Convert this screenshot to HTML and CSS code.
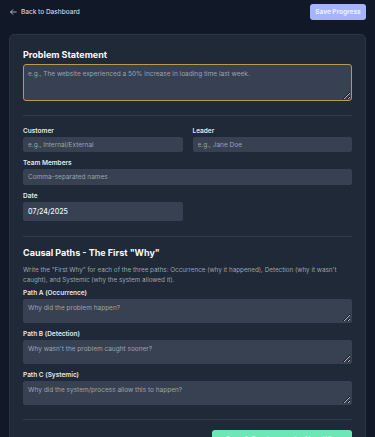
FILE: index.html
```html
<!DOCTYPE html>
<html>
<head>
	<title>5 Whys - Problem</title>
	<link rel="stylesheet" href="styles.css">
</head>
<body>
	<header class="topbar">
		<a href="#" class="back">
			<svg width="9" height="8" viewBox="0 0 24 24" fill="none" stroke="currentColor" stroke-width="2.4" stroke-linecap="round" stroke-linejoin="round"><path d="M20 12H4M10 5l-7 7 7 7"/></svg>
			Back to Dashboard
		</a>
		<button class="btn-save">Save Progress</button>
	</header>

	<main class="card">
		<!-- problem -->
		<h2 class="title">Problem Statement</h2>
		<textarea class="area area-main" placeholder="e.g., The website experienced a 50% increase in loading time last week."></textarea>

		<hr class="divider">

		<div class="row">
			<div class="field">
				<label>Customer</label>
				<input type="text" placeholder="e.g., Internal/External">
			</div>
			<div class="field">
				<label>Leader</label>
				<input type="text" placeholder="e.g., Jane Doe">
			</div>
		</div>
		<div class="field">
			<label>Team Members</label>
			<input type="text" class="wide" placeholder="Comma-separated names">
		</div>
		<div class="row">
			<div class="field">
				<label>Date</label>
				<input type="text" class="date" value="07/24/2025">
			</div>
		</div>

		<hr class="divider">

		<!-- causal paths -->
		<h2 class="title title-section">Causal Paths - The First "Why"</h2>
		<p class="desc">Write the "First Why" for each of the three paths: Occurrence (why it happened), Detection (why it wasn't caught), and Systemic (why the system allowed it).</p>

		<div class="field">
			<label>Path A (Occurrence)</label>
			<textarea class="area" placeholder="Why did the problem happen?"></textarea>
		</div>
		<div class="field">
			<label>Path B (Detection)</label>
			<textarea class="area" placeholder="Why wasn't the problem caught sooner?"></textarea>
		</div>
		<div class="field">
			<label>Path C (Systemic)</label>
			<textarea class="area" placeholder="Why did the system/process allow this to happen?"></textarea>
		</div>

		<hr class="divider">

		<div class="actions">
			<button class="btn-next">Save &amp; Continue to the Next Why</button>
		</div>
	</main>
</body>
</html>
```
FILE: styles.css
```css
body {
	margin: 0;
	background: #111827;
	font-family: Inter, "Noto Sans", sans-serif;
	color: #e5e7eb;
	overflow: hidden;
}
.topbar {
	display: flex;
	justify-content: space-between;
	align-items: center;
	padding: 4px 9px 0 9px;
	height: 16px;
}
.back {
	display: flex;
	align-items: center;
	gap: 3px;
	color: #d1d5db;
	font-size: 6.5px;
	font-weight: 500;
	text-decoration: none;
}
.btn-save {
	width: 56px;
	height: 16px;
	border: none;
	border-radius: 3px;
	background: #a5b4fc;
	color: #eef2ff;
	font-family: inherit;
	font-size: 6.5px;
	font-weight: 700;
	padding: 0;
}
.card {
	margin: 14px 9px 0 9px;
	background: #1f2937;
	border: 1px solid #2b3544;
	border-radius: 5px;
	padding: 14px 13px 30px 13px;
}
.title {
	margin: 0 0 4px 0;
	font-size: 9px;
	line-height: 11px;
	font-weight: 700;
	color: #f9fafb;
}
.title-section {
	margin-top: 2px;
}
.area, input {
	display: block;
	box-sizing: border-box;
	width: 100%;
	background: #374151;
	border: 1px solid #374151;
	border-radius: 2px;
	color: #f3f4f6;
	font-family: inherit;
	font-size: 6.5px;
	padding: 4px 4px;
	margin: 0;
}
.area::placeholder, input::placeholder {
	color: #9ca3af;
}
.area {
	height: 24px;
	resize: vertical;
}
.area-main {
	height: 37px;
	border: 1.5px solid #b89a4a;
	border-radius: 3px;
	padding-top: 5px;
}
input {
	height: 15px;
}
input.wide {
	height: 16px;
}
input.date {
	height: 19px;
	font-size: 7px;
	font-weight: 500;
}
.divider {
	border: none;
	border-top: 1px solid #323c4b;
	margin: 14px 0 10px 0;
}
.divider + .row {
	padding-top: 1px;
}
.row {
	display: grid;
	grid-template-columns: 1fr 1fr;
	gap: 10px;
}
.field {
	margin-bottom: 7px;
}
.field label {
	display: block;
	font-size: 6.5px;
	font-weight: 600;
	line-height: 8px;
	margin: 0 0 2px 0;
	color: #e5e7eb;
}
.row + .divider {
	margin-top: 8px;
}
.field + .divider {
	margin-top: 14px;
}
.desc {
	margin: 7px 0 4px 0;
	font-size: 6.3px;
	line-height: 10px;
	color: #9ca3af;
}
.actions {
	display: flex;
	justify-content: flex-end;
}
.btn-next {
	width: 140px;
	height: 18px;
	border: none;
	border-radius: 3px;
	background: #6ee7b7;
	color: #c6f6e0;
	font-family: inherit;
	font-size: 7px;
	font-weight: 700;
}
```
